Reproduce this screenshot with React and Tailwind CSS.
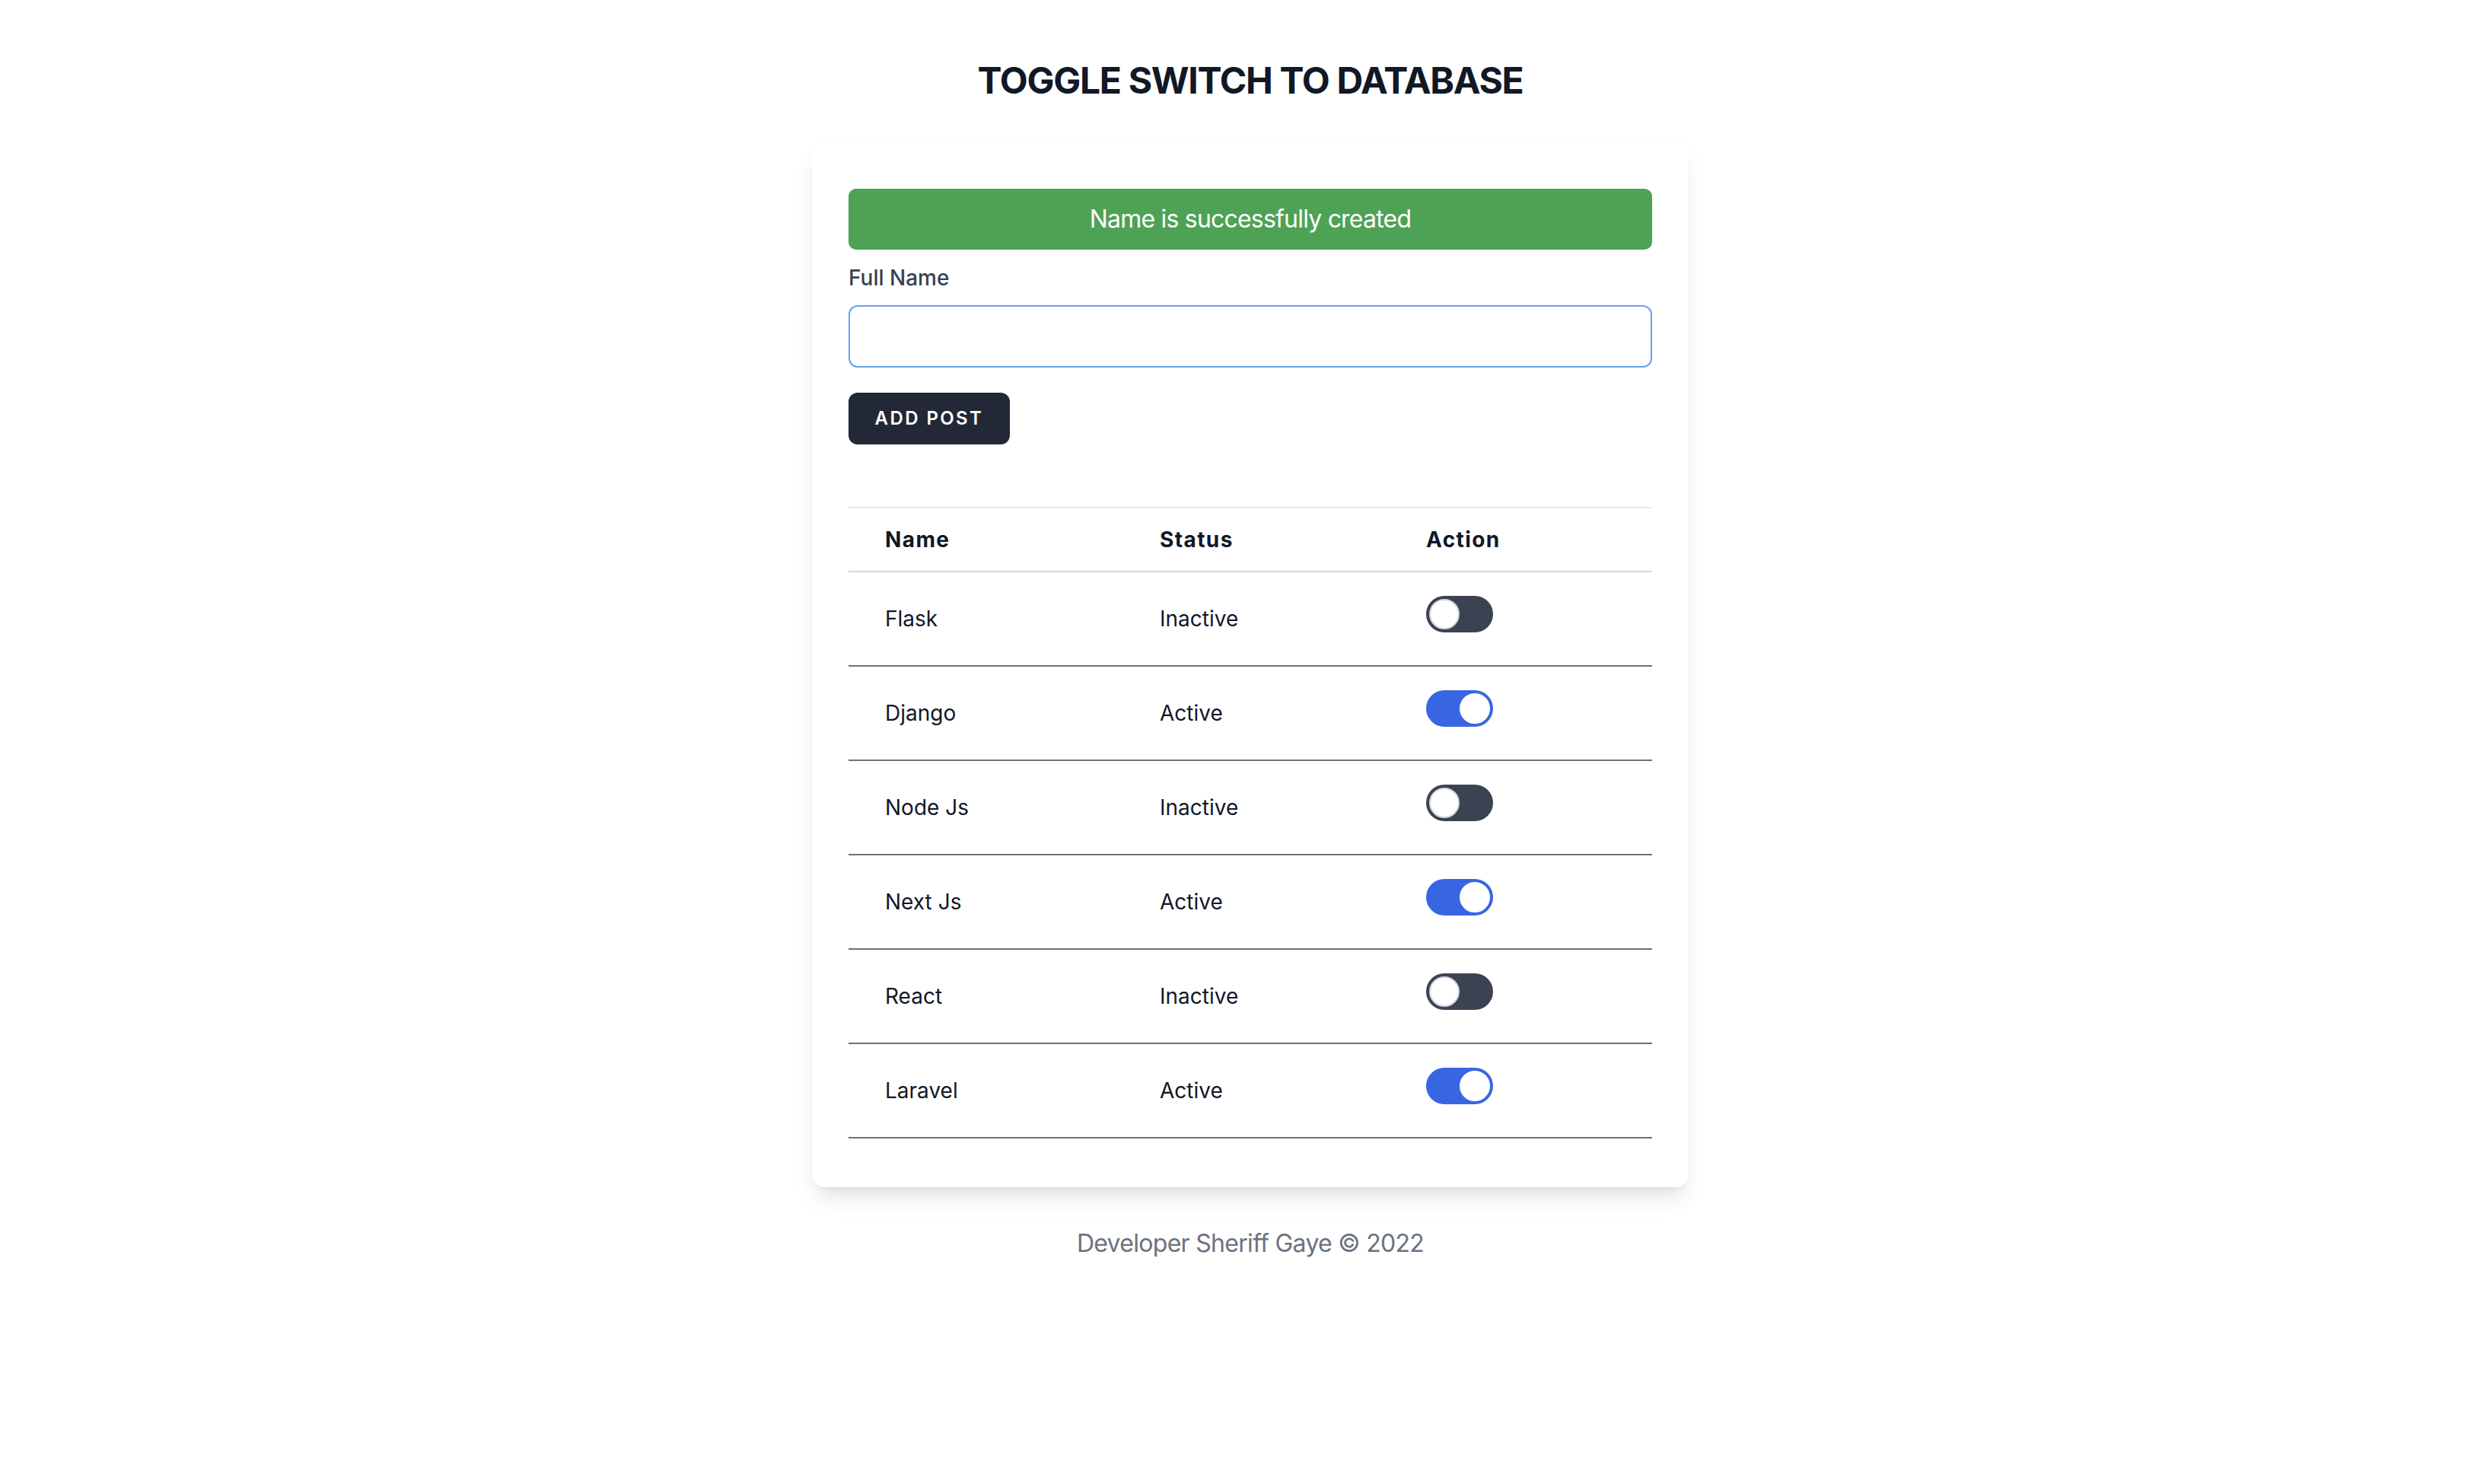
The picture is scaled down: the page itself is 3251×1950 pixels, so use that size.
import React, { useState } from 'react';

const initialRows = [
  { id: 1, name: 'Flask', active: false },
  { id: 2, name: 'Django', active: true },
  { id: 3, name: 'Node Js', active: false },
  { id: 4, name: 'Next Js', active: true },
  { id: 5, name: 'React', active: false },
  { id: 6, name: 'Laravel', active: true },
];

function Toggle({ on, onClick }) {
  return (
    <button
      type="button"
      onClick={onClick}
      className={`relative mb-[12px] h-[48px] w-[88px] rounded-full ${on ? 'bg-[#3866e3]' : 'bg-[#3b4252]'}`}
    >
      <span
        className={`absolute top-[4px] h-[40px] w-[40px] rounded-full border-2 bg-white ${
          on ? 'left-[44px] border-white' : 'left-[4px] border-[#d1d5db]'
        }`}
      />
    </button>
  );
}

export default function App() {
  const [rows, setRows] = useState(initialRows);
  const [name, setName] = useState('');

  const flip = id => setRows(rs => rs.map(r => (r.id === id ? { ...r, active: !r.active } : r)));

  return (
    <div className="min-h-screen bg-white pl-[35px] font-['Inter',_sans-serif]">
      <div className="flex flex-col items-center">
        <h1 className="mt-[74px] text-[48px] leading-[64px] font-bold tracking-[-0.027em] text-[#111827]">
          TOGGLE SWITCH TO DATABASE
        </h1>

        <div className="mt-[45px] w-[1152px] rounded-[16px] bg-white px-[48px] pt-[65px] pb-[64px] shadow-[0_20px_30px_-6px_rgba(0,0,0,0.1),0_8px_12px_-8px_rgba(0,0,0,0.1),0_0_2px_rgba(0,0,0,0.04)]">
          {/* Alert */}
          <div className="flex h-[80px] items-center justify-center rounded-[10px] bg-[#4ea255] text-[32px] tracking-[-0.025em] text-white">
            Name is successfully created
          </div>

          <label className="mt-[17px] block text-[28px] leading-[40px] font-medium text-[#374151]">Full Name</label>
          <input
            value={name}
            onChange={e => setName(e.target.value)}
            className="mt-[16px] block h-[82px] w-full rounded-[12px] border-2 border-[#6aa1f2] px-[24px] text-[32px] outline-none"
          />
          <button
            type="button"
            className="mt-[33px] h-[68px] w-[212px] rounded-[12px] bg-[#222836] text-[24px] font-semibold tracking-[0.1em] text-white"
          >
            ADD POST
          </button>

          {/* Table */}
          <div className="mt-[82px]">
            <div className="grid h-[86px] grid-cols-[361px_350px_1fr] items-center border-t-2 border-b-2 border-t-[#e5e7eb] border-b-[#d1d5db] text-[28px] font-bold tracking-[0.05em] text-[#111827]">
              <div className="pl-[48px]">Name</div>
              <div className="pl-[48px]">Status</div>
              <div className="pl-[48px]">Action</div>
            </div>
            {rows.map(r => (
              <div
                key={r.id}
                className="grid h-[124px] grid-cols-[361px_350px_1fr] items-center border-b-2 border-[#6b7280] text-[28px] text-[#111827]"
              >
                <div className="pl-[48px]">{r.name}</div>
                <div className="pl-[48px]">{r.active ? 'Active' : 'Inactive'}</div>
                <div className="flex items-center pl-[48px]">
                  <Toggle on={r.active} onClick={() => flip(r.id)} />
                </div>
              </div>
            ))}
          </div>
        </div>

        <p className="mt-[50px] text-[32px] leading-[48px] tracking-[-0.022em] text-[#6b7280]">Developer Sheriff Gaye © 2022</p>
      </div>
    </div>
  );
}
